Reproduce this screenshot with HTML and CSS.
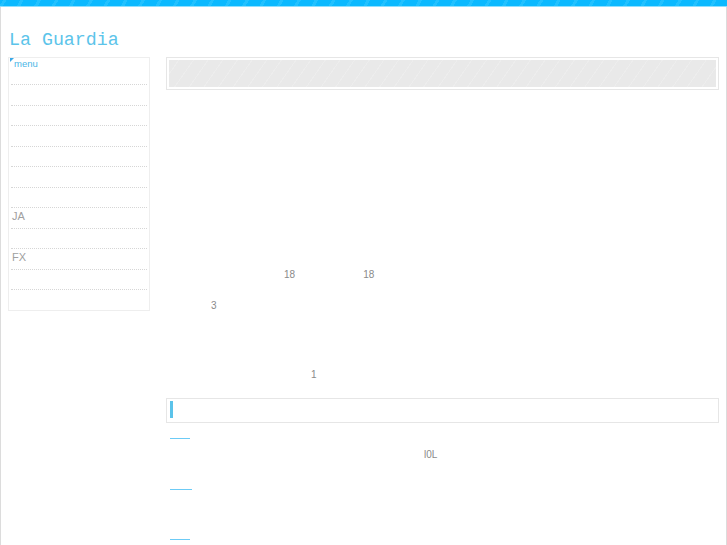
FILE: index.html
```html
<!DOCTYPE html>
<html lang="en">
<head>
    <meta charset="UTF-8">
    <meta name="viewport" content="width=device-width, initial-scale=1.0">
    <title>La Guardia</title>
    <link rel="stylesheet" href="styles.css">
</head>
<body>
    <div class="topbar"></div>
    <div class="page">
        <h1 class="site-title">La Guardia</h1>
        <div class="layout">
            <aside class="sidebar">
                <div class="menu-head">menu</div>
                <ul class="menu">
                    <li></li>
                    <li></li>
                    <li></li>
                    <li></li>
                    <li></li>
                    <li></li>
                    <li>JA</li>
                    <li></li>
                    <li>FX</li>
                    <li></li>
                    <li></li>
                </ul>
            </aside>
            <main class="content">
                <div class="banner"><div class="banner-inner"></div></div>
                <div class="board">
                    <div class="row row-a">
                        <span class="num">18</span>
                        <span class="num num-gap">18</span>
                    </div>
                    <div class="row row-b"><span class="num">3</span></div>
                    <div class="row row-c"><span class="num">1</span></div>
                </div>
                <div class="entry"><span class="caret"></span></div>
                <div class="posts">
                    <div class="post">
                        <span class="rule"></span>
                        <span class="post-tag">l0L</span>
                    </div>
                    <div class="post"><span class="rule rule-wide"></span></div>
                    <div class="post post-last"><span class="rule"></span></div>
                </div>
            </main>
        </div>
    </div>
</body>
</html>
```

FILE: styles.css
```css
:root {
    --color-blue: #0bb9ff;
    --color-title: #5cc4ea;
    --color-line: #e6e6e6;
    --color-text-muted: #8a8a8a;
}

body {
    margin: 0;
    font-family: 'Liberation Sans', Arial, sans-serif;
    background: #ffffff;
}

.topbar {
    height: 6px;
    background: repeating-linear-gradient(-60deg, var(--color-blue) 0 12px, #22c1ff 12px 15px);
    border-bottom: 1px solid #8fdfff;
}

.page {
    border-left: 1px solid #dcdcdc;
    border-right: 1px solid #dcdcdc;
    height: 538px;
    padding: 0 7px;
    box-sizing: border-box;
    overflow: hidden;
}

.site-title {
    margin: 0;
    padding: 22px 0 0 1px;
    font-family: 'Liberation Mono', 'Courier New', monospace;
    font-weight: normal;
    font-size: 18.3px;
    line-height: 23px;
    color: var(--color-title);
}

.layout {
    display: flex;
    gap: 16px;
    margin-top: 5px;
}

.sidebar {
    width: 142px;
    height: 254px;
    box-sizing: border-box;
    border: 1px solid #eeeeee;
    flex-shrink: 0;
}

.menu-head {
    position: relative;
    height: 26px;
    padding-left: 5px;
    font-size: 9.5px;
    line-height: 11px;
    color: #4ab6e6;
}

.menu-head::before {
    content: '';
    position: absolute;
    left: 1px;
    top: 0;
    border-top: 4px solid #3aa9e8;
    border-right: 4px solid transparent;
}

.menu {
    list-style: none;
    margin: 0;
    padding: 0 2px;
}

.menu li {
    height: 19.5px;
    border-top: 1px dotted #d6d6d6;
    padding-left: 1px;
    font-size: 11px;
    line-height: 16px;
    color: #a0a0a0;
}

.content {
    flex: 1;
}

.banner {
    border: 1px solid var(--color-line);
    padding: 2px;
    height: 33px;
    box-sizing: border-box;
}

.banner-inner {
    height: 100%;
    background:
        repeating-linear-gradient(-55deg, transparent 0 11px, #ededed 11px 12px),
        #e9e9e9;
}

.board {
    height: 308px;
    font-size: 10px;
    color: var(--color-text-muted);
}

.row {
    display: flex;
}

.row-a {
    padding: 179px 0 0 118px;
}

.num-gap {
    margin-left: 68px;
}

.row-b {
    padding: 20px 0 0 45px;
}

.row-c {
    padding: 58px 0 0 145px;
}

.entry {
    border: 1px solid var(--color-line);
    height: 25px;
    box-sizing: border-box;
    padding: 2px 3px;
}

.caret {
    display: block;
    width: 3px;
    height: 17px;
    background: #5bc3ea;
}

.posts {
    padding: 15px 0 0 4px;
}

.post {
    height: 51px;
}

.post:nth-child(2) {
    height: 50px;
}

.post-last {
    height: 10px;
}

.rule {
    display: block;
    width: 20px;
    height: 1px;
    background: #6ccbf6;
}

.rule-wide {
    width: 22px;
}

.post-tag {
    display: block;
    margin: 10px 0 0 254px;
    font-size: 10px;
    color: var(--color-text-muted);
}
```
